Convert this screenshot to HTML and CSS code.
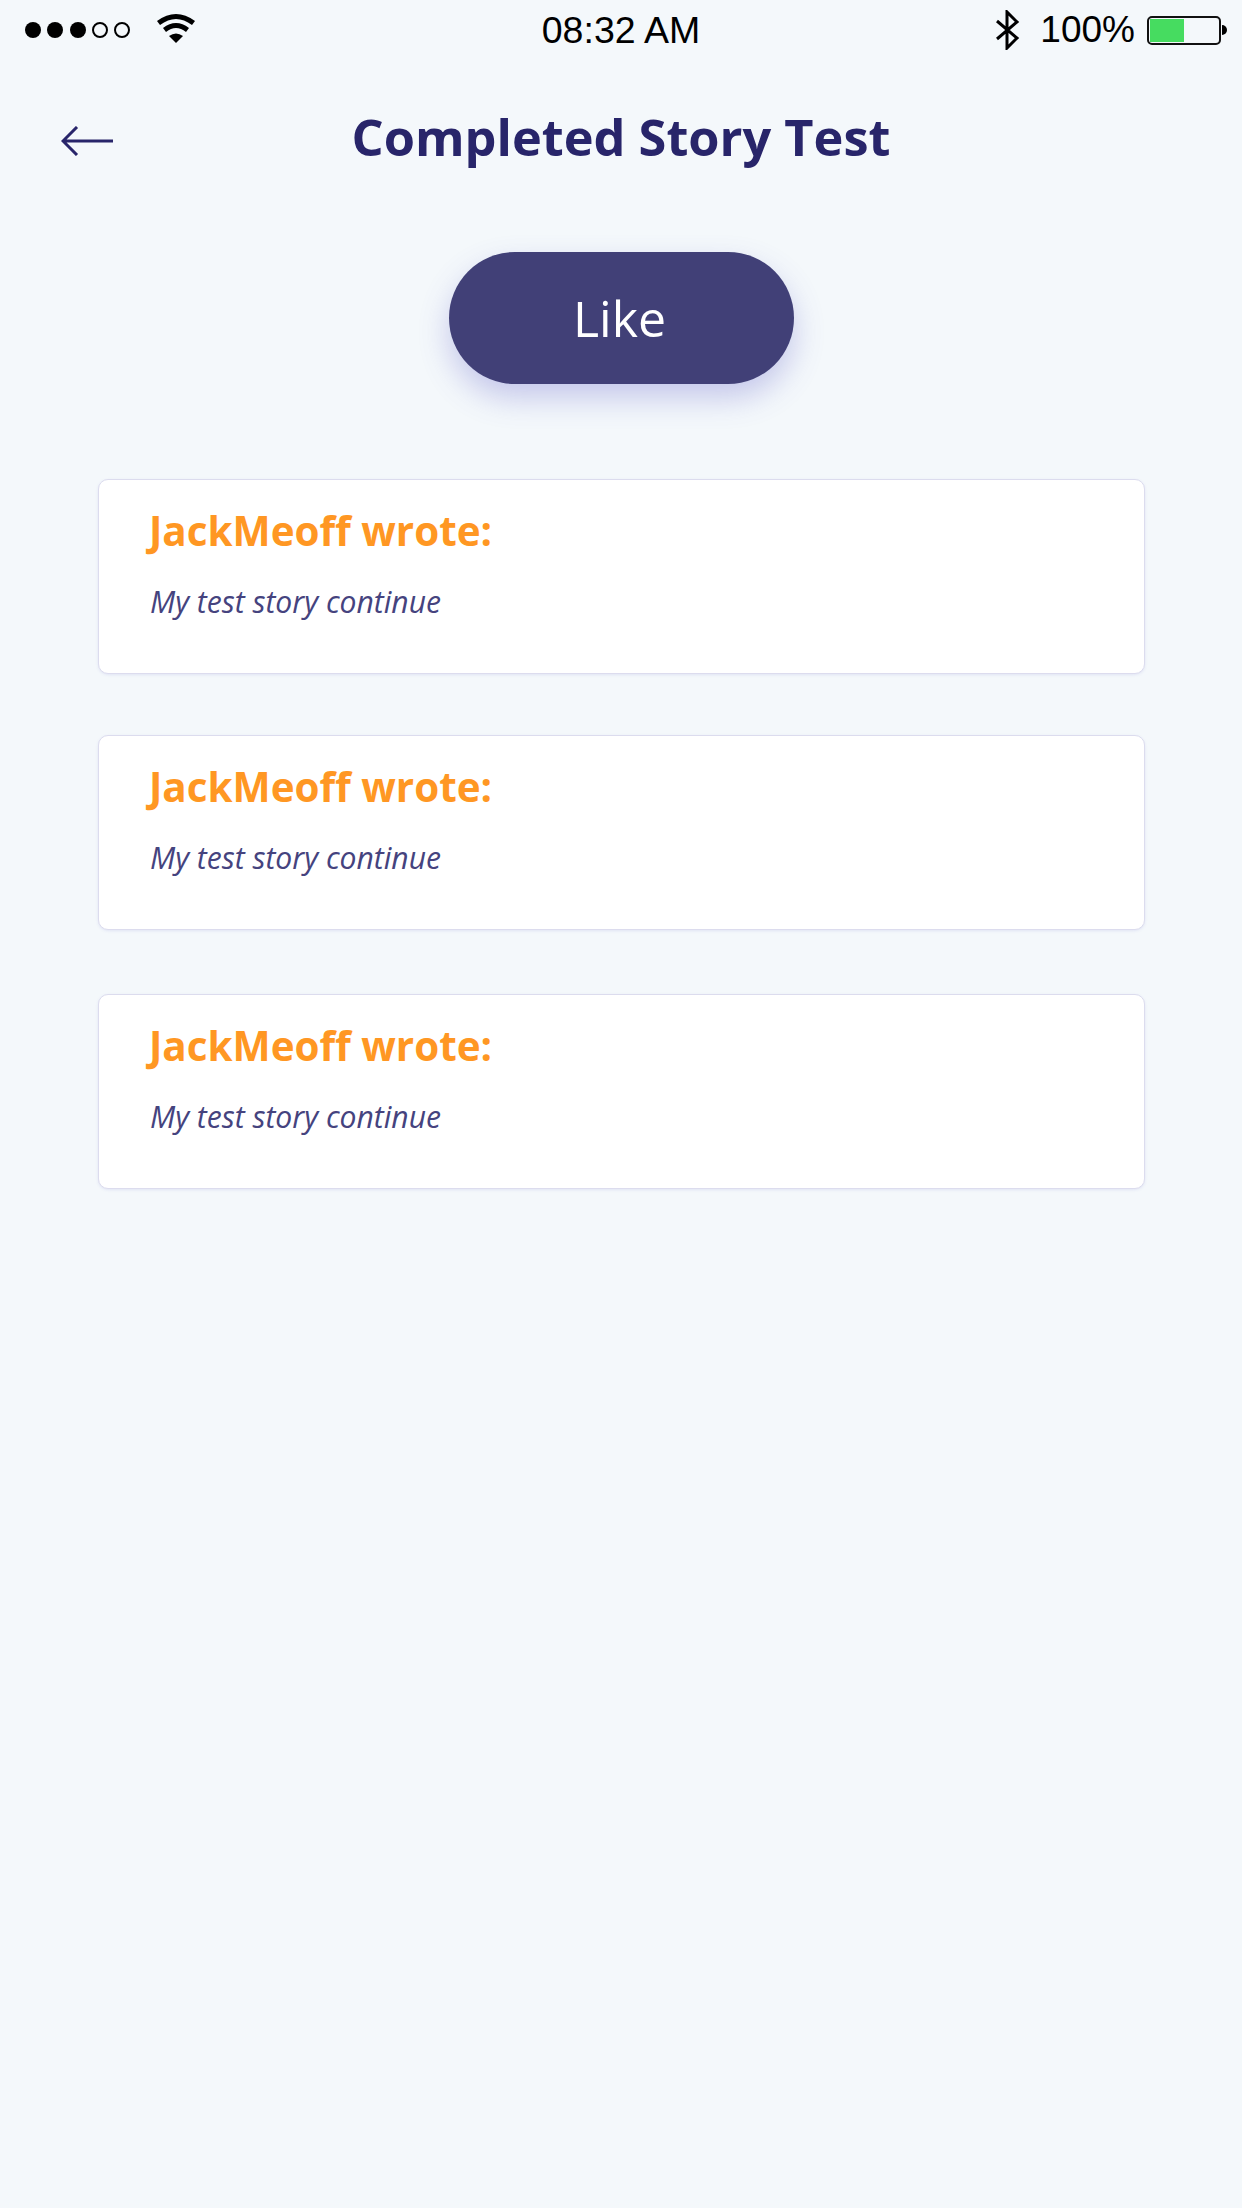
FILE: index.html
```html
<!DOCTYPE html>
<html lang="en">
<head>
  <meta charset="UTF-8">
  <title>Completed Story Test</title>
  <link rel="stylesheet" href="styles.css">
</head>
<body>
  <div class="status-bar">
    <div class="status-left">
      <svg class="signal" width="108" height="20" viewBox="0 0 108 20">
        <circle cx="8" cy="10" r="8"/>
        <circle cx="30" cy="10" r="8"/>
        <circle cx="53" cy="10" r="8"/>
        <circle cx="75" cy="10" r="7" class="empty"/>
        <circle cx="97" cy="10" r="7" class="empty"/>
      </svg>
      <svg class="wifi" width="38" height="30" viewBox="0 0 38 30">
        <path d="M0 8 Q19 -6 38 8 L35 12 Q19 0 3 12 Z"/>
        <path d="M6 15 Q19 5 32 15 L29 19 Q19 11 9 19 Z"/>
        <path d="M12 23 Q19 18 26 23 L19 30 Z"/>
      </svg>
    </div>
    <div class="status-time">08:32 AM</div>
    <div class="status-right">
      <svg class="bluetooth" width="24" height="40" viewBox="0 0 24 40">
        <path d="M1 11 L21 28 L11 38 V2 L21 12 L1 29" fill="none" stroke="#000" stroke-width="3"/>
      </svg>
      <span class="battery-text">100%</span>
      <div class="battery">
        <div class="battery-level"></div>
      </div>
      <div class="battery-tip"></div>
    </div>
  </div>

  <div class="header">
    <svg class="back" width="54" height="30" viewBox="0 0 54 30">
      <path d="M52 15 H2 M16 1 L2 15 L16 29" fill="none" stroke="#28256a" stroke-width="3"/>
    </svg>
    <h1>Completed Story Test</h1>
  </div>

  <div class="like-row">
    <button class="like">Like</button>
  </div>

  <div class="cards">
    <div class="card">
      <h2>JackMeoff wrote:</h2>
      <p>My test story continue</p>
    </div>
    <div class="card">
      <h2>JackMeoff wrote:</h2>
      <p>My test story continue</p>
    </div>
    <div class="card">
      <h2>JackMeoff wrote:</h2>
      <p>My test story continue</p>
    </div>
  </div>
</body>
</html>
```

FILE: styles.css
```css
body {
  margin: 0;
  height: 2208px;
  overflow: hidden;
  background-color: #f4f8fb;
  font-family: "Open Sans", sans-serif;
}
.status-bar {
  height: 60px;
  display: grid;
  grid-template-columns: 1fr auto 1fr;
  align-items: center;
}
.status-left {
  display: flex;
  align-items: center;
  gap: 24px;
  padding-left: 25px;
}
.signal circle {
  fill: #000;
}
.signal .empty {
  fill: none;
  stroke: #000;
  stroke-width: 2;
}
.wifi {
  margin-top: -4px;
}
.status-time {
  font-family: "Liberation Sans", sans-serif;
  font-size: 37.5px;
  color: #000;
}
.status-right {
  display: flex;
  align-items: center;
  justify-content: flex-end;
  padding-right: 15px;
}
.bluetooth {
  margin-right: 20px;
}
.battery-text {
  font-family: "Liberation Sans", sans-serif;
  font-size: 37px;
  margin-right: 12px;
}
.battery {
  width: 74px;
  height: 29px;
  box-sizing: border-box;
  border: 2px solid #111;
  border-radius: 5px;
  padding: 1px;
}
.battery-level {
  width: 34px;
  height: 100%;
  background: #46dc60;
}
.battery-tip {
  width: 5px;
  height: 10px;
  margin-left: 1px;
  background: #000;
  border-radius: 0 5px 5px 0;
}
.header {
  height: 80px;
  margin-top: 36px;
  position: relative;
  display: flex;
  align-items: center;
  justify-content: center;
}
.header h1 {
  margin: 0;
  font-size: 50.5px;
  font-weight: 700;
  color: #28256a;
}
.back {
  position: absolute;
  left: 61px;
  top: 30px;
}
.like-row {
  display: flex;
  justify-content: center;
  margin-top: 76px;
}
.like {
  width: 345px;
  height: 132px;
  padding: 0 3px 0 0;
  border: none;
  border-radius: 66px;
  background: #414077;
  color: #fff;
  font-family: "Open Sans", sans-serif;
  font-size: 50px;
  box-shadow: 0 14px 30px rgba(90, 90, 200, 0.3);
}
.cards {
  margin: 95px 97px 0 98px;
  display: flex;
  flex-direction: column;
  gap: 61px;
}
.card {
  height: 195px;
  box-sizing: border-box;
  background: #fff;
  border: 1px solid #dcdcee;
  border-radius: 10px;
  box-shadow: 0 1px 3px rgba(90, 90, 200, 0.12);
  padding: 24px 50px;
}
.card:last-child {
  margin-top: 3px;
}
.card h2 {
  margin: 0;
  font-size: 40.4px;
  line-height: 54px;
  font-weight: 700;
  color: #ff9723;
}
.card p {
  margin: 24px 0 0 1px;
  font-size: 30.1px;
  line-height: 40px;
  font-style: italic;
  color: #45437e;
}
```
